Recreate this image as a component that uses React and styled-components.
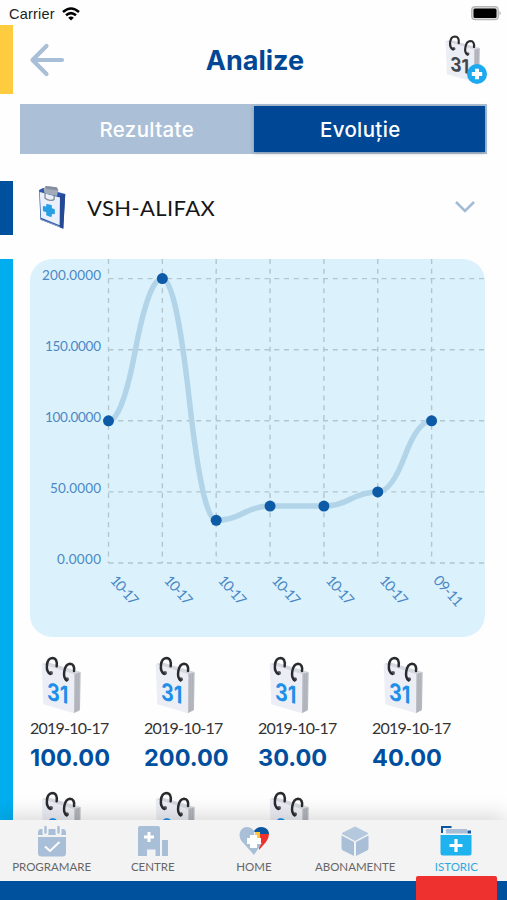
import React, { useState } from 'react'
import styled, { createGlobalStyle } from 'styled-components';


const GlobalStyle = createGlobalStyle`
* {
  box-sizing: border-box;
}
body {
  margin: 0;
  background: #ffffff;
  font-family: Lato, "Liberation Sans", sans-serif;
}
button {
  font-family: inherit;
  border: none;
  background: none;
  padding: 0;
  cursor: pointer;
}
svg {
  display: block;
}
`;

const Screen = styled.div`
display: flex;
flex-direction: column;
width: 507px;
height: 900px;
overflow: hidden;
background: #fefefe;
`;

const StatusBar = styled.div`
display: flex;
align-items: center;
justify-content: space-between;
flex: none;
height: 25px;
padding: 2px 5px 0 9px;
`;

const Carrier = styled.div`
display: flex;
align-items: center;
gap: 7px;
font-family: "Liberation Sans", sans-serif;
font-size: 14.5px;
letter-spacing: 0.2px;
color: #222;
`;

const Body = styled.div`
display: flex;
flex: 1;
min-height: 0;
`;

const Rail = styled.div`
flex: none;
width: 13px;
`;

const RailBlock = styled.div`
height: ${(p) => p.$height}px;
margin-bottom: ${(p) => p.$gap}px;
background: ${(p) => p.$color};
`;

const Content = styled.div`
flex: 1;
min-width: 0;
padding: 0 20px 0 7px;
overflow-y: auto;
scrollbar-width: none;
`;

const Header = styled.div`
display: grid;
grid-template-columns: 57px 1fr 63px;
align-items: center;
height: 79px;
padding: 0 0 9px 9px;
`;

const Title = styled.h1`
margin: 0;
font-family: Inter, sans-serif;
font-size: 27px;
font-weight: 700;
color: #004796;
text-align: center;
`;

const AddButton = styled.button`
position: relative;
justify-self: end;
width: 43px;
height: 51px;
margin-top: -3px;
`;

const AddBadge = styled.svg`
position: absolute;
right: 0;
bottom: 0;
`;

const Tabs = styled.div`
display: flex;
height: 50px;
padding: 2px 2px 2px 0;
background: #abc0d7;
`;

const Tab = styled.button`
flex: 1;
padding-left: ${(p) => (p.$active ? 0 : 20)}px;
padding-right: ${(p) => (p.$active ? 18 : 0)}px;
font-family: Inter, sans-serif;
font-size: 20.5px;
font-weight: 500;
letter-spacing: 0.35px;
color: #ffffff;
background: ${(p) => (p.$active ? '#004796' : 'transparent')};
box-shadow: ${(p) => (p.$active ? '0 1px 4px rgba(0, 0, 0, 0.25)' : 'none')};
`;

const Selector = styled.button`
display: flex;
align-items: center;
width: 100%;
height: 105px;
padding: 0 11px 0 17px;
`;

const SelectorName = styled.span`
flex: 1;
margin: 1px 0 0 20px;
font-size: 22px;
letter-spacing: 0.4px;
color: #161616;
text-align: left;
`;

const ChartCard = styled.div`
width: 455px;
height: 378px;
margin-left: 10px;
border-radius: 22px;
background: #dbf2fd;
overflow: hidden;
`;

const Results = styled.div`
display: grid;
grid-template-columns: repeat(4, 114px);
grid-auto-rows: 135px;
padding: 18px 0 0 10px;
`;

const Result = styled.div`
svg {
  margin-left: 10px;
}
`;

const ResultDate = styled.div`
margin-top: 4px;
font-size: 16px;
line-height: 18px;
letter-spacing: -0.75px;
color: #333;
white-space: nowrap;
`;

const ResultValue = styled.div`
margin-top: 6px;
font-family: Inter, sans-serif;
font-size: 23.5px;
font-weight: 700;
line-height: 30px;
color: #004f9f;
`;

const TabBar = styled.nav`
position: relative;
display: grid;
grid-template-columns: repeat(5, 1fr);
flex: none;
height: 61px;
padding-left: 1px;
background: #f3f3f3;
box-shadow: 0 -3px 22px rgba(0, 0, 0, 0.17);
`;

const TabItem = styled.button`
display: flex;
flex-direction: column;
align-items: center;
padding-top: 5px;
font-size: 11.5px;
line-height: 14px;
color: ${(p) => (p.$active ? '#2ea9e0' : '#666666')};

svg {
  margin-bottom: 2px;
}
`;

const Footer = styled.div`
position: relative;
flex: none;
height: 19px;
background: #00519d;
`;

const ActiveMark = styled.div`
position: absolute;
right: 10px;
bottom: 0;
width: 81px;
height: 24px;
border-radius: 2px 2px 0 0;
background: #ee302e;
`;

const POINTS = [
    { label: '10-17', value: 100 },
    { label: '10-17', value: 200 },
    { label: '10-17', value: 30 },
    { label: '10-17', value: 40 },
    { label: '10-17', value: 40 },
    { label: '10-17', value: 50 },
    { label: '09-11', value: 100 },
];

const RESULTS = ['100.00', '200.00', '30.00', '40.00', '40.00', '50.00', '100.00'];

const px = (i) => 78.5 + i * 53.85;
const py = (value) => 304 - value * 1.422;

function curve() {
    let d = `M${px(0)} ${py(POINTS[0].value)}`;
    for (let i = 0; i < POINTS.length - 1; i++) {
        const x1 = px(i);
        const x2 = px(i + 1);
        const y1 = py(POINTS[i].value);
        const y2 = py(POINTS[i + 1].value);
        const mx = (x1 + x2) / 2;
        const my = (y1 + y2) / 2;
        d += ` Q${(x1 + mx) / 2} ${y1} ${mx} ${my} Q${(mx + x2) / 2} ${y2} ${x2} ${y2}`;
    }
    return d;
}

function Chart() {
    return (
        <svg width="455" height="378" fontSize="13.5" fill="#4b87c4">
            <g stroke="#b3c5cd" strokeWidth="1.4" strokeDasharray="5 4.75">
                {[0, 50, 100, 150, 200].map((v) => (
                    <line key={v} x1="78.5" x2="455" y1={py(v)} y2={py(v)} />
                ))}
                {POINTS.map((p, i) => (
                    <line key={i} x1={px(i)} x2={px(i)} y1="0" y2="304" />
                ))}
            </g>
            {[[0, 44], [50, 51], [100, 56], [150, 56], [200, 59]].map(([v, w]) => (
                <text key={v} x="71" y={py(v) + 1} textAnchor="end" textLength={w}>{v.toFixed(4)}</text>
            ))}
            {POINTS.map((p, i) => (
                <text key={i} transform={`translate(${px(i) + 1} 322) rotate(48)`} fontSize="14.5" textLength={i === 6 ? 36 : 34}>{p.label}</text>
            ))}
            <path d={curve()} fill="none" stroke="#b2d4e8" strokeWidth="5.5" />
            {POINTS.map((p, i) => (
                <circle key={i} cx={px(i)} cy={py(p.value)} r="5.5" fill="#0d5ba6" />
            ))}
        </svg>
    )
}

function CalendarIcon({ width, height, color }) {
    return (
        <svg width={width} height={height} viewBox="60 15 126 180" preserveAspectRatio="none">
            <path d="M65 42 L84 37 L182 66 L163 74Z" fill="#d5d8df" />
            <path d="M161 73 L182 66 L180 180 L162 190Z" fill="#b9bcc2" />
            <path d="M169 71 L168 186 M175 69 L174 183" stroke="#a4a7ad" strokeWidth="2" />
            <path d="M65 42 L163 73 L162 190 L70 163Z" fill="#eceef5" />
            <circle cx="93" cy="69" r="6" fill="#55585d" />
            <circle cx="141" cy="88" r="6" fill="#55585d" />
            <path d="M91 72 C75 64 78 25 97 24 C108 24 112 34 110 49" fill="none" stroke="#292b2e" strokeWidth="7.5" strokeLinecap="round" />
            <path d="M140 91 C126 82 132 42 150 41 C160 41 164 51 162 63" fill="none" stroke="#292b2e" strokeWidth="7.5" strokeLinecap="round" />
            <text transform="translate(81 149) skewY(11)" fontFamily="Inter, sans-serif" fontSize="72" fontWeight="700" textLength="64" lengthAdjust="spacingAndGlyphs" fill={color}>31</text>
        </svg>
    )
}

function ClipboardIcon() {
    return (
        <svg width="30" height="48" viewBox="112 55 90 145">
            <path d="M118 76 L130 70 L197 88 L191 193 L122 165Z" fill="#2a56ad" />
            <path d="M181 94 L197 88 L191 193 L180 188Z" fill="#244995" />
            <path d="M120 82 L181 99 L180 183 L124 160Z" fill="#e9effb" />
            <path d="M122 165 L180 187" stroke="#8fa0c4" strokeWidth="3" />
            <path d="M132 75 L137 64 L171 68 L176 77 L172 94 L134 87Z" fill="#a3abb9" />
            <path d="M137 64 L171 68 L176 77 L140 73Z" fill="#858e9f" />
            <path d="M136 85 L136 101 Q150 112 163 105 L164 93" fill="none" stroke="#858b96" strokeWidth="4" />
            <path d="M142 121 L154 124 L154 133 L163 136 L163 147 L154 145 L154 155 L142 151 L142 141 L132 138 L132 127 L142 130Z" fill="#279fe5" stroke="#279fe5" strokeWidth="5" strokeLinejoin="round" />
        </svg>
    )
}

function ProgramareIcon() {
    return (
        <svg width="30" height="33" viewBox="0 0 30 33">
            <path d="M1 10 V8 Q1 4 4 4 H26 Q29 4 29 8 V10Z" fill="#a9bfd7" />
            <path d="M8.5 1 V8 M21.5 1 V8" stroke="#f3f3f3" strokeWidth="6" strokeLinecap="round" />
            <path d="M8.5 2 V7.5 M21.5 2 V7.5" stroke="#a9bfd7" strokeWidth="2.4" strokeLinecap="round" />
            <path d="M1 12 H29 V28 Q29 31.5 25.5 31.5 H4.5 Q1 31.5 1 28Z" fill="#a9bfd7" />
            <path d="M8 21.5 L13 26 L22.5 17" fill="none" stroke="#fff" strokeWidth="2" />
        </svg>
    )
}

function CentreIcon() {
    return (
        <svg width="32" height="33" viewBox="0 0 32 33">
            <path d="M1 3 Q1 1 3 1 H21 Q23 1 23 3 V31 H18.5 V24.5 H10 V31 H1Z" fill="#a9bfd7" />
            <path d="M25 15 H31 V31 H25Z" fill="#a9bfd7" />
            <path d="M12 7 V17 M7 12 H17" stroke="#fff" strokeWidth="3" />
        </svg>
    )
}

function HomeIcon() {
    return (
        <svg width="32" height="33" viewBox="0 0 32 33">
            <path d="M16 30 L3.5 16 C-1 9 3 2 9 2 Q13 2 16 6 V30Z" fill="#a9bfd7" />
            <path d="M16 6 Q19 2 23 2 C29 2 31 6 31 9 H18Z" fill="#0c55a1" />
            <path d="M22 9 H31 Q31 13 28 17 L21 25Z" fill="#ee302e" />
            <path d="M16 18 H24 L16 30Z" fill="#a9bfd7" />
            <path d="M17 7 H22 V13 H17Z" fill="#ffc83d" />
            <path d="M12 10 H19 V13 H23 V19 H19 V23 H12 V19 H9 V13 H12Z" fill="#fff" />
        </svg>
    )
}

function AbonamenteIcon() {
    return (
        <svg width="30" height="33" viewBox="0 0 30 33">
            <path d="M15 2 L28 8.5 L15 15.5 L2 8.5Z" fill="#b4c8de" stroke="#b4c8de" strokeLinejoin="round" />
            <path d="M1.5 10.5 L14 17 V31 L3 25.5 Q1.5 24.5 1.5 23Z" fill="#a9bfd7" />
            <path d="M28.5 10.5 L16 17 V31 L27 25.5 Q28.5 24.5 28.5 23Z" fill="#a9bfd7" />
        </svg>
    )
}

function IstoricIcon() {
    return (
        <svg width="32" height="33" viewBox="0 0 32 33">
            <path d="M2 8 V2 H11.5" fill="none" stroke="#0c55a1" strokeWidth="2" />
            <path d="M6 8.5 V4 H27 V8.5Z" fill="#a9bfd7" />
            <path d="M27.5 5.5 H31 V8.5 H27.5Z" fill="#12559d" />
            <path d="M0.5 10 H31.5 V28 Q31.5 30.5 29 30.5 H3 Q0.5 30.5 0.5 28Z" fill="#1eb2ee" />
            <path d="M16 14 V27 M9.5 20.5 H22.5" stroke="#fff" strokeWidth="3.2" />
        </svg>
    )
}

const MENU = [
    { name: 'PROGRAMARE', Icon: ProgramareIcon },
    { name: 'CENTRE', Icon: CentreIcon },
    { name: 'HOME', Icon: HomeIcon },
    { name: 'ABONAMENTE', Icon: AbonamenteIcon },
    { name: 'ISTORIC', Icon: IstoricIcon },
];

function App() {

    const [tab, setTab] = useState('Evoluție');
    const [page, setPage] = useState('ISTORIC');

    return (
        <>
            <GlobalStyle />
            <Screen>
                <StatusBar>
                    <Carrier>
                        Carrier
                        <svg width="18" height="14" viewBox="0 0 18 14" fill="none" stroke="#000" strokeWidth="2.5">
                            <path d="M1 5 Q9 -2 17 5" />
                            <path d="M4 8.3 Q9 4 14 8.3" />
                            <path d="M9 13.5 L6.2 10.7 Q9 8.5 11.8 10.7Z" fill="#000" stroke="none" />
                        </svg>
                    </Carrier>
                    <svg width="31" height="15" viewBox="0 0 31 15">
                        <rect x="0.7" y="0.7" width="26.6" height="13" rx="3.5" fill="#ddd" stroke="#b5b5b5" strokeWidth="1.2" />
                        <rect x="2.5" y="2.5" width="23" height="9.5" rx="1.5" fill="#000" />
                        <path d="M28.5 5 Q31 7.2 28.5 9.5Z" fill="#aaa" />
                    </svg>
                </StatusBar>
                <Body>
                    <Rail>
                        <RailBlock $height={69} $gap={87} $color="#ffcb3f" />
                        <RailBlock $height={54} $gap={24} $color="#00519d" />
                        <RailBlock $height={561} $gap={0} $color="#00aeef" />
                    </Rail>
                    <Content>
                        <Header>
                            <button aria-label="Înapoi">
                                <svg width="36" height="34" viewBox="0 0 36 34" fill="none" stroke="#a9bfd7" strokeWidth="4.2" strokeLinecap="round" strokeLinejoin="round">
                                    <path d="M17.5 3 L3.5 17 L17.5 31 M3.5 17 H33" />
                                </svg>
                            </button>
                            <Title>Analize</Title>
                            <AddButton aria-label="Adaugă">
                                <CalendarIcon width={37} height={49} color="#43474d" />
                                <AddBadge width="20" height="20" viewBox="0 0 20 20">
                                    <circle cx="10" cy="10" r="10" fill="#1ba9f0" />
                                    <path d="M10 4.8 V15.2 M4.8 10 H15.2" stroke="#fff" strokeWidth="4" />
                                </AddBadge>
                            </AddButton>
                        </Header>
                        <Tabs>
                            {['Rezultate', 'Evoluție'].map((name) => (
                                <Tab key={name} $active={tab === name} onClick={() => setTab(name)}>{name}</Tab>
                            ))}
                        </Tabs>
                        <Selector>
                            <ClipboardIcon />
                            <SelectorName>VSH-ALIFAX</SelectorName>
                            <svg width="22" height="14" viewBox="0 0 22 14" fill="none" stroke="#a3bcd6" strokeWidth="2.6">
                                <path d="M2 2 L11 11 L20 2" />
                            </svg>
                        </Selector>
                        <ChartCard>
                            <Chart />
                        </ChartCard>
                        <Results>
                            {RESULTS.map((value, i) => (
                                <Result key={i}>
                                    <CalendarIcon width={42} height={60} color="#1e8fea" />
                                    <ResultDate>2019-10-17</ResultDate>
                                    <ResultValue>{value}</ResultValue>
                                </Result>
                            ))}
                        </Results>
                    </Content>
                </Body>
                <TabBar>
                    {MENU.map(({ name, Icon }) => (
                        <TabItem key={name} $active={page === name} onClick={() => setPage(name)}>
                            <Icon />
                            {name}
                        </TabItem>
                    ))}
                </TabBar>
                <Footer>
                    <ActiveMark />
                </Footer>
            </Screen>
        </>
    )
}

export default App
